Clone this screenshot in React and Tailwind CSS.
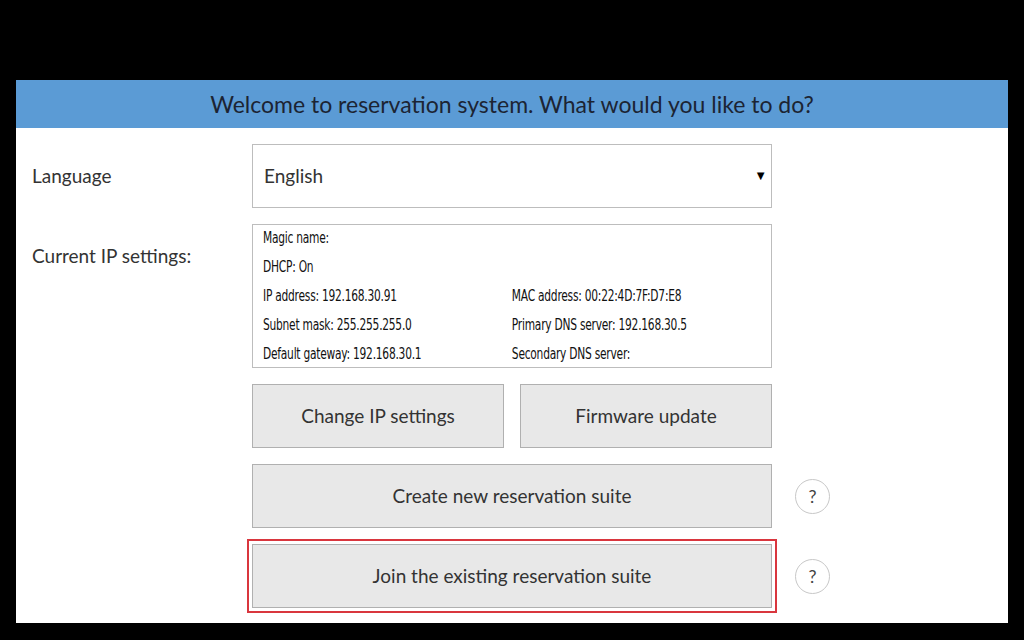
import React from "react";

const ipRows = [
  ["Magic name:", ""],
  ["DHCP: On", ""],
  ["IP address: 192.168.30.91", "MAC address: 00:22:4D:7F:D7:E8"],
  ["Subnet mask: 255.255.255.0", "Primary DNS server: 192.168.30.5"],
  ["Default gateway: 192.168.30.1", "Secondary DNS server:"],
];

const HelpButton = ({ className = "ml-[23px]" }) => (
  <button className={`shrink-0 w-[35px] h-[35px] rounded-full border border-[#c8c8c8] bg-white text-[18px] text-[#444] flex items-center justify-center ${className}`}>
    ?
  </button>
);

const btn = "h-[64px] bg-[#e8e8e8] border border-[#b0b0b0] text-[19px] text-[#333]";

export default function App() {
  return (
    <div className="w-[1024px] h-[640px] bg-black pt-[80px] px-[16px] overflow-hidden" style={{ fontFamily: "Lato, 'Open Sans', sans-serif" }}>
      <div className="bg-white h-[543px] w-[992px]">
        <div className="h-[48px] bg-[#5b9bd5] flex items-center justify-center text-[23px] text-[#1c2433]">
          Welcome to reservation system. What would you like to do?
        </div>

        <div className="flex pt-[16px] text-[#333]">
          <div className="w-[236px] pl-[16px]">
            <div className="h-[64px] flex items-center text-[19px]">Language</div>
            <div className="mt-[17px] pt-[17px] text-[19px]">Current IP settings:</div>
          </div>

          <div className="w-[520px]">
            <div className="h-[64px] border border-[#bdbdbd] flex items-center justify-between pl-[11px] pr-[4px] text-[19px]">
              <span>English</span>
              <span className="text-[13px] text-black">▼</span>
            </div>

            <div className="mt-[16px] h-[144px] border border-[#bdbdbd] pl-[10px] overflow-hidden text-[#111]" style={{ fontFamily: "'DejaVu Sans Condensed', 'Liberation Sans Narrow', Lato, sans-serif" }}>
              <div className="origin-top-left scale-x-[0.79] w-[620px]">
                {ipRows.map(([a, b], i) => (
                  <div key={i} className="flex h-[29px] items-center pb-[3px] text-[15px] tracking-[-0.3px]">
                    <span className="w-[315px]">{a}</span>
                    <span>{b}</span>
                  </div>
                ))}
              </div>
            </div>

            <div className="mt-[16px] flex gap-[16px]">
              <button className={`w-[252px] ${btn}`}>Change IP settings</button>
              <button className={`w-[252px] ${btn}`}>Firmware update</button>
            </div>

            <div className="mt-[16px] flex items-center">
              <button className={`w-[520px] shrink-0 ${btn}`}>Create new reservation suite</button>
              <HelpButton />
            </div>

            <div className="mt-[16px] flex items-center -ml-[5px]">
              <div className="shrink-0 -my-[5px] p-[3px] border-2 border-[#d9363e]">
                <button className={`block w-[520px] ${btn}`}>Join the existing reservation suite</button>
              </div>
              <HelpButton className="ml-[18px]" />
            </div>
          </div>
        </div>
      </div>
    </div>
  );
}
